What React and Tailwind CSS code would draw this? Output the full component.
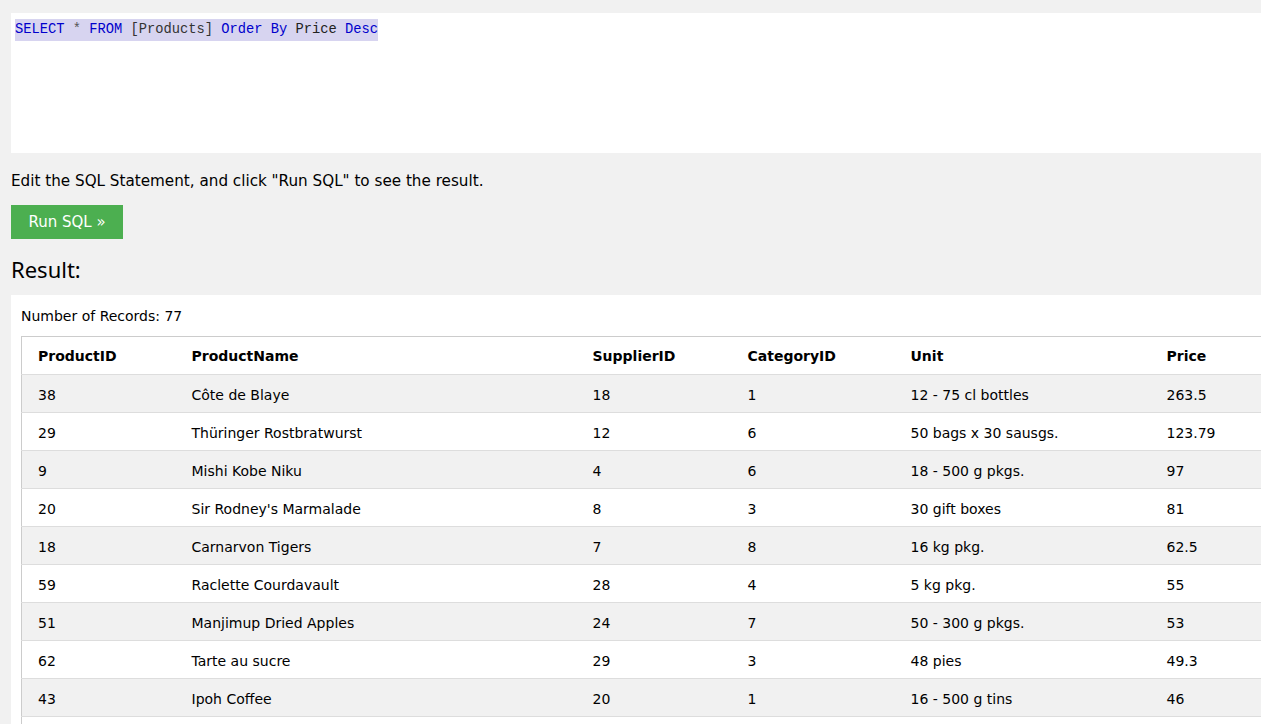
const rows = [
  ["38", "Côte de Blaye", "18", "1", "12 - 75 cl bottles", "263.5"],
  ["29", "Thüringer Rostbratwurst", "12", "6", "50 bags x 30 sausgs.", "123.79"],
  ["9", "Mishi Kobe Niku", "4", "6", "18 - 500 g pkgs.", "97"],
  ["20", "Sir Rodney's Marmalade", "8", "3", "30 gift boxes", "81"],
  ["18", "Carnarvon Tigers", "7", "8", "16 kg pkg.", "62.5"],
  ["59", "Raclette Courdavault", "28", "4", "5 kg pkg.", "55"],
  ["51", "Manjimup Dried Apples", "24", "7", "50 - 300 g pkgs.", "53"],
  ["62", "Tarte au sucre", "29", "3", "48 pies", "49.3"],
  ["43", "Ipoh Coffee", "20", "1", "16 - 500 g tins", "46"],
  ["28", "Rössle Sauerkraut", "12", "7", "25 - 825 g cans", "45.6"],
]

const headers = ["ProductID", "ProductName", "SupplierID", "CategoryID", "Unit", "Price"]
const widths = ["w-[154px]", "w-[401px]", "w-[155px]", "w-[163px]", "w-[256px]", "w-[160px]"]

export default function App() {
  return (
    <div className="h-[724px] w-[1261px] overflow-hidden bg-[#f1f1f1] text-black" style={{ fontFamily: '"DejaVu Sans", Verdana, sans-serif' }}>
      <div className="w-[1400px] pl-[11px] pt-[13px]">
        {/* SQL editor */}
        <div className="h-[140px] bg-white pl-[4px] pt-[3px]">
          <div className="inline-block bg-[#d7d4f0] py-[2px] text-[13.75px] leading-[18px]" style={{ fontFamily: '"Liberation Mono", monospace' }}>
            <span className="text-[#0000cc]">SELECT</span>
            <span className="text-[#555]"> * </span>
            <span className="text-[#0000cc]">FROM</span>
            <span className="text-[#333]"> [Products] </span>
            <span className="text-[#0000cc]">Order By</span>
            <span className="text-[#222]"> Price </span>
            <span className="text-[#0000cc]">Desc</span>
          </div>
        </div>

        <p className="mt-[18px] text-[15.2px] leading-[20px]">Edit the SQL Statement, and click "Run SQL" to see the result.</p>

        <button className="mt-[14px] h-[34px] w-[112px] bg-[#4caf50] text-[15px] text-white">Run SQL »</button>

        <h2 className="mt-[16px] text-[22px] leading-[28px]" style={{ fontFamily: '"Noto Sans", "Open Sans", sans-serif' }}>Result:</h2>

        {/* Result panel */}
        <div className="mt-[12px] bg-white pl-[10px] pt-[12px]">
          <p className="text-[14px] leading-[18px]">Number of Records: 77</p>
          <table className="mt-[11px] table-fixed border-collapse border border-[#ccc] text-[14px]">
            <thead>
              <tr className="h-[38px] border-b border-[#ddd] bg-white">
                {headers.map((h, i) => (
                  <th key={h} className={`${widths[i]} pl-[16px] pt-[2px] text-left font-bold`}>{h}</th>
                ))}
              </tr>
            </thead>
            <tbody>
              {rows.map((r, ri) => (
                <tr key={ri} className={`h-[38px] border-b border-[#ddd] ${ri % 2 === 0 ? "bg-[#f1f1f1]" : "bg-white"}`}>
                  {r.map((c, ci) => (
                    <td key={ci} className="pl-[16px] pt-[3px]">{c}</td>
                  ))}
                </tr>
              ))}
            </tbody>
          </table>
        </div>
      </div>
    </div>
  )
}
